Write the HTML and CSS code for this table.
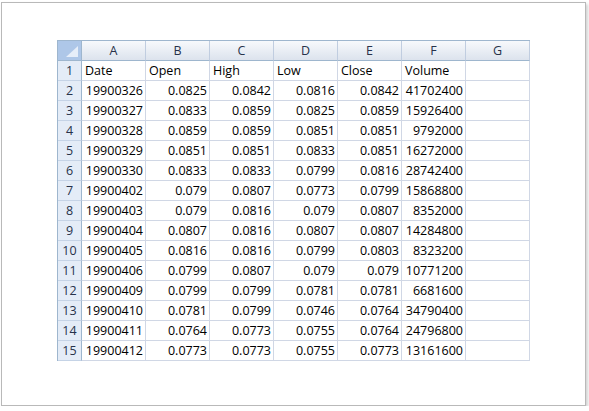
FILE: index.html
```html
<!DOCTYPE html>
<html>
<head>
<meta charset="utf-8">
<link rel="stylesheet" href="styles.css">
</head>
<body>
<div class="page">
  <div class="sheet">
    <div class="corner"><span class="tri"></span></div>
    <div class="colhead">A</div><div class="colhead">B</div><div class="colhead">C</div><div class="colhead">D</div><div class="colhead">E</div><div class="colhead">F</div><div class="colhead">G</div>

    <div class="rowhead">1</div><div class="c">Date</div><div class="c">Open</div><div class="c">High</div><div class="c">Low</div><div class="c">Close</div><div class="c">Volume</div><div class="c"></div>
    <div class="rowhead">2</div><div class="c n">19900326</div><div class="c n">0.0825</div><div class="c n">0.0842</div><div class="c n">0.0816</div><div class="c n">0.0842</div><div class="c n">41702400</div><div class="c"></div>
    <div class="rowhead">3</div><div class="c n">19900327</div><div class="c n">0.0833</div><div class="c n">0.0859</div><div class="c n">0.0825</div><div class="c n">0.0859</div><div class="c n">15926400</div><div class="c"></div>
    <div class="rowhead">4</div><div class="c n">19900328</div><div class="c n">0.0859</div><div class="c n">0.0859</div><div class="c n">0.0851</div><div class="c n">0.0851</div><div class="c n">9792000</div><div class="c"></div>
    <div class="rowhead">5</div><div class="c n">19900329</div><div class="c n">0.0851</div><div class="c n">0.0851</div><div class="c n">0.0833</div><div class="c n">0.0851</div><div class="c n">16272000</div><div class="c"></div>
    <div class="rowhead">6</div><div class="c n">19900330</div><div class="c n">0.0833</div><div class="c n">0.0833</div><div class="c n">0.0799</div><div class="c n">0.0816</div><div class="c n">28742400</div><div class="c"></div>
    <div class="rowhead">7</div><div class="c n">19900402</div><div class="c n">0.079</div><div class="c n">0.0807</div><div class="c n">0.0773</div><div class="c n">0.0799</div><div class="c n">15868800</div><div class="c"></div>
    <div class="rowhead">8</div><div class="c n">19900403</div><div class="c n">0.079</div><div class="c n">0.0816</div><div class="c n">0.079</div><div class="c n">0.0807</div><div class="c n">8352000</div><div class="c"></div>
    <div class="rowhead">9</div><div class="c n">19900404</div><div class="c n">0.0807</div><div class="c n">0.0816</div><div class="c n">0.0807</div><div class="c n">0.0807</div><div class="c n">14284800</div><div class="c"></div>
    <div class="rowhead">10</div><div class="c n">19900405</div><div class="c n">0.0816</div><div class="c n">0.0816</div><div class="c n">0.0799</div><div class="c n">0.0803</div><div class="c n">8323200</div><div class="c"></div>
    <div class="rowhead">11</div><div class="c n">19900406</div><div class="c n">0.0799</div><div class="c n">0.0807</div><div class="c n">0.079</div><div class="c n">0.079</div><div class="c n">10771200</div><div class="c"></div>
    <div class="rowhead">12</div><div class="c n">19900409</div><div class="c n">0.0799</div><div class="c n">0.0799</div><div class="c n">0.0781</div><div class="c n">0.0781</div><div class="c n">6681600</div><div class="c"></div>
    <div class="rowhead">13</div><div class="c n">19900410</div><div class="c n">0.0781</div><div class="c n">0.0799</div><div class="c n">0.0746</div><div class="c n">0.0764</div><div class="c n">34790400</div><div class="c"></div>
    <div class="rowhead">14</div><div class="c n">19900411</div><div class="c n">0.0764</div><div class="c n">0.0773</div><div class="c n">0.0755</div><div class="c n">0.0764</div><div class="c n">24796800</div><div class="c"></div>
    <div class="rowhead">15</div><div class="c n">19900412</div><div class="c n">0.0773</div><div class="c n">0.0773</div><div class="c n">0.0755</div><div class="c n">0.0773</div><div class="c n">13161600</div><div class="c"></div>
  </div>
</div>
</body>
</html>
```
FILE: styles.css
```css
html, body {
  margin: 0;
  padding: 0;
  background: #ffffff;
}
body {
  font-family: "Open Sans", Lato, "Liberation Sans", sans-serif;
  font-size: 12.5px;
  color: #000;
}
.page {
  box-sizing: border-box;
  margin: 2px 0 0 1px;
  width: 585px;
  height: 404px;
  border: 1px solid #b9b9b9;
  box-shadow: 2px 2px 3px rgba(0,0,0,0.18);
  padding: 37px 0 0 55px;
  background: #fff;
}
.sheet {
  display: grid;
  grid-template-columns: 24px repeat(7, 64px);
  grid-auto-rows: 20px;
  width: 473px;
  box-sizing: border-box;
  border-left: 1px solid #9eb6ce;
  border-top: 1px solid #9eb6ce;
}
.sheet > div {
  box-sizing: border-box;
  border-right: 1px solid #d0d7e5;
  border-bottom: 1px solid #d0d7e5;
  line-height: 20px;
  white-space: nowrap;
  overflow: hidden;
}
.corner {
  position: relative;
  background: #aec7e8;
  border-right-color: #9eb6ce !important;
  border-bottom-color: #9eb6ce !important;
}
.tri {
  position: absolute;
  right: 3px;
  bottom: 3px;
  width: 0;
  height: 0;
  border-left: 12px solid transparent;
  border-bottom: 11px solid #e6eef9;
}
.sheet > .colhead {
  background: linear-gradient(#f7f9fc, #dce3ed);
  border-right-color: #c0cde0;
  border-bottom-color: #9eb6ce;
  text-align: center;
  color: #27324a;
}
.sheet > .rowhead {
  background: #e4ecf7;
  border-right-color: #9eb6ce;
  border-bottom-color: #c5d3e6;
  text-align: center;
  color: #27324a;
}
.c {
  padding: 0 3px;
}
.c.n {
  text-align: right;
  padding-right: 2px;
}
```
